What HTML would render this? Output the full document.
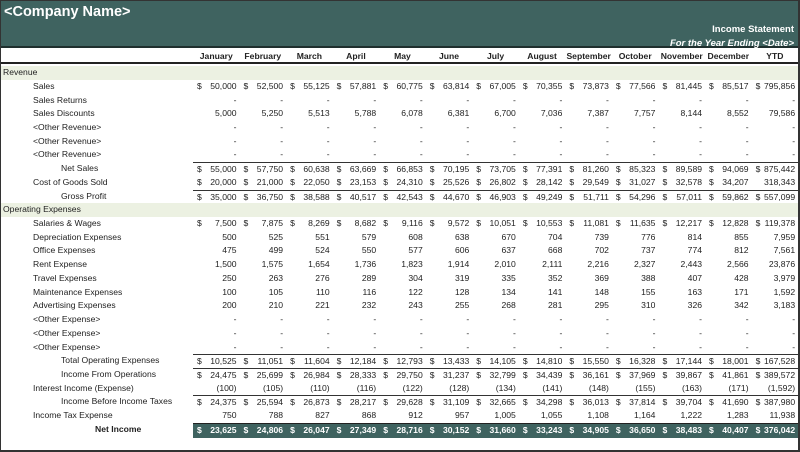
<!DOCTYPE html>
<html><head><meta charset="utf-8"><style>
*{margin:0;padding:0;box-sizing:border-box}
body{width:800px;height:452px;background:#fff;font-family:"Liberation Sans",sans-serif;font-size:8.6px;color:#222;position:relative;overflow:hidden}
.frame{position:absolute;left:0;top:0;width:800px;height:452px;border:1px solid #333;border-right:2px solid #333;border-bottom:2px solid #333}
.band{position:absolute;left:0;top:0;width:800px;height:48px;background:#3f6360;border-bottom:2px solid #1f2f2e}
.cn{position:absolute;left:4px;top:4px;color:#fff;font-size:14.5px;font-weight:bold}
.t1{position:absolute;right:6px;top:24px;color:#fff;font-weight:bold;font-size:9.5px}
.t2{position:absolute;right:6px;top:38px;color:#fff;font-weight:bold;font-style:italic;font-size:9.5px}
.r{position:absolute;left:1px;width:797px;height:13.73px;display:grid;grid-template-columns:192px repeat(13,46.55px);align-items:center;white-space:nowrap}
.r>div{position:relative;height:100%;line-height:13.73px;text-align:right;padding-right:3px}
.r>div:first-child{text-align:left;padding:0}
.r>div i{font-style:normal;position:absolute;left:4px}
.hd{top:50px;font-weight:bold;border-bottom:2px solid #222}
.hd>div{text-align:center!important;padding:0!important}
.sec{background:#ecf1e2}
.l1{padding-left:2px!important}.l2{padding-left:32px!important}.l3{padding-left:60px!important}.l4{padding-left:94px!important;font-weight:bold}
.tb>div:not(:first-child){border-top:1px solid #333}
.bb>div:not(:first-child){border-bottom:1px solid #333}
.ni>div:not(:first-child){background:#3f6360;color:#fff;font-weight:bold}
.ni>div:not(:first-child){border-top:1px solid #222}
</style></head><body>
<div class="band"><div class="cn">&lt;Company Name&gt;</div><div class="t1">Income Statement</div><div class="t2">For the Year Ending &lt;Date&gt;</div></div>
<div class="r hd"><div></div><div>January</div><div>February</div><div>March</div><div>April</div><div>May</div><div>June</div><div>July</div><div>August</div><div>September</div><div>October</div><div>November</div><div>December</div><div>YTD</div></div>

<div class="r sec" style="top:66px"><div class="l1">Revenue</div></div>
<div class="r" style="top:79.7px"><div class="l2">Sales</div><div><i>$</i>50,000</div><div><i>$</i>52,500</div><div><i>$</i>55,125</div><div><i>$</i>57,881</div><div><i>$</i>60,775</div><div><i>$</i>63,814</div><div><i>$</i>67,005</div><div><i>$</i>70,355</div><div><i>$</i>73,873</div><div><i>$</i>77,566</div><div><i>$</i>81,445</div><div><i>$</i>85,517</div><div><i>$</i>795,856</div></div>
<div class="r" style="top:93.5px"><div class="l2">Sales Returns</div><div>-</div><div>-</div><div>-</div><div>-</div><div>-</div><div>-</div><div>-</div><div>-</div><div>-</div><div>-</div><div>-</div><div>-</div><div>-</div></div>
<div class="r" style="top:107.2px"><div class="l2">Sales Discounts</div><div>5,000</div><div>5,250</div><div>5,513</div><div>5,788</div><div>6,078</div><div>6,381</div><div>6,700</div><div>7,036</div><div>7,387</div><div>7,757</div><div>8,144</div><div>8,552</div><div>79,586</div></div>
<div class="r" style="top:120.9px"><div class="l2">&lt;Other Revenue&gt;</div><div>-</div><div>-</div><div>-</div><div>-</div><div>-</div><div>-</div><div>-</div><div>-</div><div>-</div><div>-</div><div>-</div><div>-</div><div>-</div></div>
<div class="r" style="top:134.6px"><div class="l2">&lt;Other Revenue&gt;</div><div>-</div><div>-</div><div>-</div><div>-</div><div>-</div><div>-</div><div>-</div><div>-</div><div>-</div><div>-</div><div>-</div><div>-</div><div>-</div></div>
<div class="r" style="top:148.4px"><div class="l2">&lt;Other Revenue&gt;</div><div>-</div><div>-</div><div>-</div><div>-</div><div>-</div><div>-</div><div>-</div><div>-</div><div>-</div><div>-</div><div>-</div><div>-</div><div>-</div></div>
<div class="r tb" style="top:162.1px"><div class="l3">Net Sales</div><div><i>$</i>55,000</div><div><i>$</i>57,750</div><div><i>$</i>60,638</div><div><i>$</i>63,669</div><div><i>$</i>66,853</div><div><i>$</i>70,195</div><div><i>$</i>73,705</div><div><i>$</i>77,391</div><div><i>$</i>81,260</div><div><i>$</i>85,323</div><div><i>$</i>89,589</div><div><i>$</i>94,069</div><div><i>$</i>875,442</div></div>
<div class="r" style="top:175.8px"><div class="l2">Cost of Goods Sold</div><div><i>$</i>20,000</div><div><i>$</i>21,000</div><div><i>$</i>22,050</div><div><i>$</i>23,153</div><div><i>$</i>24,310</div><div><i>$</i>25,526</div><div><i>$</i>26,802</div><div><i>$</i>28,142</div><div><i>$</i>29,549</div><div><i>$</i>31,027</div><div><i>$</i>32,578</div><div><i>$</i>34,207</div><div>318,343</div></div>
<div class="r tb bb" style="top:189.5px"><div class="l3">Gross Profit</div><div><i>$</i>35,000</div><div><i>$</i>36,750</div><div><i>$</i>38,588</div><div><i>$</i>40,517</div><div><i>$</i>42,543</div><div><i>$</i>44,670</div><div><i>$</i>46,903</div><div><i>$</i>49,249</div><div><i>$</i>51,711</div><div><i>$</i>54,296</div><div><i>$</i>57,011</div><div><i>$</i>59,862</div><div><i>$</i>557,099</div></div>
<div class="r sec" style="top:203.3px"><div class="l1">Operating Expenses</div></div>
<div class="r" style="top:217px"><div class="l2">Salaries &amp; Wages</div><div><i>$</i>7,500</div><div><i>$</i>7,875</div><div><i>$</i>8,269</div><div><i>$</i>8,682</div><div><i>$</i>9,116</div><div><i>$</i>9,572</div><div><i>$</i>10,051</div><div><i>$</i>10,553</div><div><i>$</i>11,081</div><div><i>$</i>11,635</div><div><i>$</i>12,217</div><div><i>$</i>12,828</div><div><i>$</i>119,378</div></div>
<div class="r" style="top:230.7px"><div class="l2">Depreciation Expenses</div><div>500</div><div>525</div><div>551</div><div>579</div><div>608</div><div>638</div><div>670</div><div>704</div><div>739</div><div>776</div><div>814</div><div>855</div><div>7,959</div></div>
<div class="r" style="top:244.4px"><div class="l2">Office Expenses</div><div>475</div><div>499</div><div>524</div><div>550</div><div>577</div><div>606</div><div>637</div><div>668</div><div>702</div><div>737</div><div>774</div><div>812</div><div>7,561</div></div>
<div class="r" style="top:258.2px"><div class="l2">Rent Expense</div><div>1,500</div><div>1,575</div><div>1,654</div><div>1,736</div><div>1,823</div><div>1,914</div><div>2,010</div><div>2,111</div><div>2,216</div><div>2,327</div><div>2,443</div><div>2,566</div><div>23,876</div></div>
<div class="r" style="top:271.9px"><div class="l2">Travel Expenses</div><div>250</div><div>263</div><div>276</div><div>289</div><div>304</div><div>319</div><div>335</div><div>352</div><div>369</div><div>388</div><div>407</div><div>428</div><div>3,979</div></div>
<div class="r" style="top:285.6px"><div class="l2">Maintenance Expenses</div><div>100</div><div>105</div><div>110</div><div>116</div><div>122</div><div>128</div><div>134</div><div>141</div><div>148</div><div>155</div><div>163</div><div>171</div><div>1,592</div></div>
<div class="r" style="top:299.3px"><div class="l2">Advertising Expenses</div><div>200</div><div>210</div><div>221</div><div>232</div><div>243</div><div>255</div><div>268</div><div>281</div><div>295</div><div>310</div><div>326</div><div>342</div><div>3,183</div></div>
<div class="r" style="top:313px"><div class="l2">&lt;Other Expense&gt;</div><div>-</div><div>-</div><div>-</div><div>-</div><div>-</div><div>-</div><div>-</div><div>-</div><div>-</div><div>-</div><div>-</div><div>-</div><div>-</div></div>
<div class="r" style="top:326.8px"><div class="l2">&lt;Other Expense&gt;</div><div>-</div><div>-</div><div>-</div><div>-</div><div>-</div><div>-</div><div>-</div><div>-</div><div>-</div><div>-</div><div>-</div><div>-</div><div>-</div></div>
<div class="r" style="top:340.5px"><div class="l2">&lt;Other Expense&gt;</div><div>-</div><div>-</div><div>-</div><div>-</div><div>-</div><div>-</div><div>-</div><div>-</div><div>-</div><div>-</div><div>-</div><div>-</div><div>-</div></div>
<div class="r tb" style="top:354.2px"><div class="l3">Total Operating Expenses</div><div><i>$</i>10,525</div><div><i>$</i>11,051</div><div><i>$</i>11,604</div><div><i>$</i>12,184</div><div><i>$</i>12,793</div><div><i>$</i>13,433</div><div><i>$</i>14,105</div><div><i>$</i>14,810</div><div><i>$</i>15,550</div><div><i>$</i>16,328</div><div><i>$</i>17,144</div><div><i>$</i>18,001</div><div><i>$</i>167,528</div></div>
<div class="r tb" style="top:367.9px"><div class="l3">Income From Operations</div><div><i>$</i>24,475</div><div><i>$</i>25,699</div><div><i>$</i>26,984</div><div><i>$</i>28,333</div><div><i>$</i>29,750</div><div><i>$</i>31,237</div><div><i>$</i>32,799</div><div><i>$</i>34,439</div><div><i>$</i>36,161</div><div><i>$</i>37,969</div><div><i>$</i>39,867</div><div><i>$</i>41,861</div><div><i>$</i>389,572</div></div>
<div class="r" style="top:381.6px"><div class="l2">Interest Income (Expense)</div><div>(100)</div><div>(105)</div><div>(110)</div><div>(116)</div><div>(122)</div><div>(128)</div><div>(134)</div><div>(141)</div><div>(148)</div><div>(155)</div><div>(163)</div><div>(171)</div><div>(1,592)</div></div>
<div class="r tb" style="top:395.4px"><div class="l3">Income Before Income Taxes</div><div><i>$</i>24,375</div><div><i>$</i>25,594</div><div><i>$</i>26,873</div><div><i>$</i>28,217</div><div><i>$</i>29,628</div><div><i>$</i>31,109</div><div><i>$</i>32,665</div><div><i>$</i>34,298</div><div><i>$</i>36,013</div><div><i>$</i>37,814</div><div><i>$</i>39,704</div><div><i>$</i>41,690</div><div><i>$</i>387,980</div></div>
<div class="r" style="top:409.1px"><div class="l2">Income Tax Expense</div><div>750</div><div>788</div><div>827</div><div>868</div><div>912</div><div>957</div><div>1,005</div><div>1,055</div><div>1,108</div><div>1,164</div><div>1,222</div><div>1,283</div><div>11,938</div></div>
<div class="r ni" style="top:422.8px"><div class="l4">Net Income</div><div><i>$</i>23,625</div><div><i>$</i>24,806</div><div><i>$</i>26,047</div><div><i>$</i>27,349</div><div><i>$</i>28,716</div><div><i>$</i>30,152</div><div><i>$</i>31,660</div><div><i>$</i>33,243</div><div><i>$</i>34,905</div><div><i>$</i>36,650</div><div><i>$</i>38,483</div><div><i>$</i>40,407</div><div><i>$</i>376,042</div></div>
<div class="frame"></div>
</body></html>
